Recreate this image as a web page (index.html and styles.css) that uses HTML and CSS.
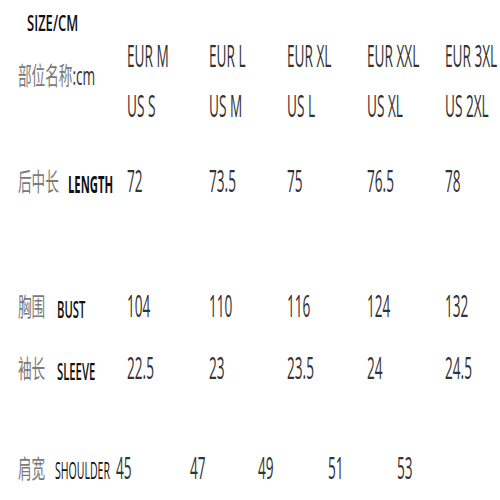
FILE: index.html
```html
<!DOCTYPE html>
<html>
<head>
<meta charset="utf-8">
<link rel="stylesheet" href="styles.css">
</head>
<body>
<div class="page">
  <div class="title"><span class="sq title-text">SIZE/CM</span></div>
  <div class="chart">
    <div class="label head-label"><span class="zh-mix">部位名称<span class="cm">:cm</span></span></div>
    <div class="cell r-eur"><span class="sq">EUR M</span></div>
    <div class="cell r-eur"><span class="sq">EUR L</span></div>
    <div class="cell r-eur"><span class="sq">EUR XL</span></div>
    <div class="cell r-eur"><span class="sq">EUR XXL</span></div>
    <div class="cell r-eur"><span class="sq">EUR 3XL</span></div>

    <div class="cell r-us"><span class="sq">US S</span></div>
    <div class="cell r-us"><span class="sq">US M</span></div>
    <div class="cell r-us"><span class="sq">US L</span></div>
    <div class="cell r-us"><span class="sq">US XL</span></div>
    <div class="cell r-us"><span class="sq">US 2XL</span></div>

    <div class="label r-length"><span class="zh w3"><span class="zq">后中长</span></span><span class="sq en bold">LENGTH</span></div>
    <div class="cell r-length"><span class="sq">72</span></div>
    <div class="cell r-length"><span class="sq">73.5</span></div>
    <div class="cell r-length"><span class="sq">75</span></div>
    <div class="cell r-length"><span class="sq">76.5</span></div>
    <div class="cell r-length"><span class="sq">78</span></div>

    <div class="label r-bust"><span class="zh w2"><span class="zq">胸围</span></span><span class="sq en semi">BUST</span></div>
    <div class="cell r-bust"><span class="sq">104</span></div>
    <div class="cell r-bust"><span class="sq">110</span></div>
    <div class="cell r-bust"><span class="sq">116</span></div>
    <div class="cell r-bust"><span class="sq">124</span></div>
    <div class="cell r-bust"><span class="sq">132</span></div>

    <div class="label r-sleeve"><span class="zh w2"><span class="zq">袖长</span></span><span class="sq en semi">SLEEVE</span></div>
    <div class="cell r-sleeve"><span class="sq">22.5</span></div>
    <div class="cell r-sleeve"><span class="sq">23</span></div>
    <div class="cell r-sleeve"><span class="sq">23.5</span></div>
    <div class="cell r-sleeve"><span class="sq">24</span></div>
    <div class="cell r-sleeve"><span class="sq">24.5</span></div>
  </div>
  <div class="shoulder">
    <div class="label s-label"><span class="zh w2s"><span class="zq">肩宽</span></span><span class="sq en reg">SHOULDER</span></div>
    <div class="s-cell s1"><span class="sq">45</span></div>
    <div class="s-cell s2"><span class="sq">47</span></div>
    <div class="s-cell s3"><span class="sq">49</span></div>
    <div class="s-cell s4"><span class="sq">51</span></div>
    <div class="s-cell s5"><span class="sq">53</span></div>
  </div>
</div>
</body>
</html>
```
FILE: styles.css
```css
* { box-sizing: border-box; margin: 0; padding: 0; }
html, body { background: #fff; }
body {
  width: 500px;
  height: 500px;
  overflow: hidden;
  font-family: "Open Sans", "Noto Sans CJK SC", sans-serif;
  color: #333;
}
.page { width: 500px; height: 500px; }

/* tall, narrow lettering: small font stretched vertically */
.sq {
  display: block;
  white-space: nowrap;
  transform: scaleY(2.273);
  transform-origin: 0 0;
  font-size: 13.64px;
  line-height: 13.2px;
}

.title { display: flex; align-items: flex-start; height: 40px; padding: 13px 0 0 27px; }
.title .title-text {
  font-size: 13.02px;
  line-height: 13.02px;
  font-weight: 600;
  color: #111;
  transform: scaleY(1.613);
}

.chart {
  display: grid;
  grid-template-columns: 127px 82px 78px 80px 78px 55px;
  grid-template-rows: 50px 75px 125px 62px 100px;
}
.cell { display: flex; align-items: flex-start; }
.label {
  grid-column: 1;
  display: flex;
  align-items: flex-start;
  padding-left: 18px;
}
.head-label { grid-row: 1 / span 2; padding-top: 23px; }

.zh-mix {
  display: block;
  white-space: nowrap;
  font-family: "Noto Sans CJK SC", sans-serif;
  font-size: 13.64px;
  line-height: 13.64px;
  color: #7a7a7a;
  transform: scaleY(1.85);
  transform-origin: 0 0;
}
.zh-mix .cm { font-family: "Open Sans", sans-serif; color: #333; }

.zh { display: flex; align-items: flex-start; flex: none; }
.w3 { width: 50px; }
.w2 { width: 39px; }
.w2s { width: 37px; }
.zq {
  display: block;
  white-space: nowrap;
  font-family: "Noto Sans CJK SC", sans-serif;
  font-size: 13.64px;
  line-height: 13.64px;
  color: #7a7a7a;
  transform: scaleY(1.85);
  transform-origin: 0 0;
  margin-top: 4px;
}
.en {
  color: #111;
  margin-top: 7px;
}
.bold { font-weight: 700; font-size: 11.28px; line-height: 11.28px; transform: scaleY(2.128); }
.semi { font-weight: 600; font-size: 11.28px; line-height: 11.28px; transform: scaleY(2.128); }
.reg { font-weight: 500; font-size: 10.56px; line-height: 10.56px; transform: scaleY(2.273); }

.shoulder {
  display: flex;
  align-items: flex-start;
}
.s-label { width: 116px; flex: none; }
.s-cell { flex: none; display: flex; align-items: flex-start; }
.s1 { width: 74px; }
.s2 { width: 68px; }
.s3 { width: 70px; }
.s4 { width: 69px; }
.s5 { width: 40px; }
```
